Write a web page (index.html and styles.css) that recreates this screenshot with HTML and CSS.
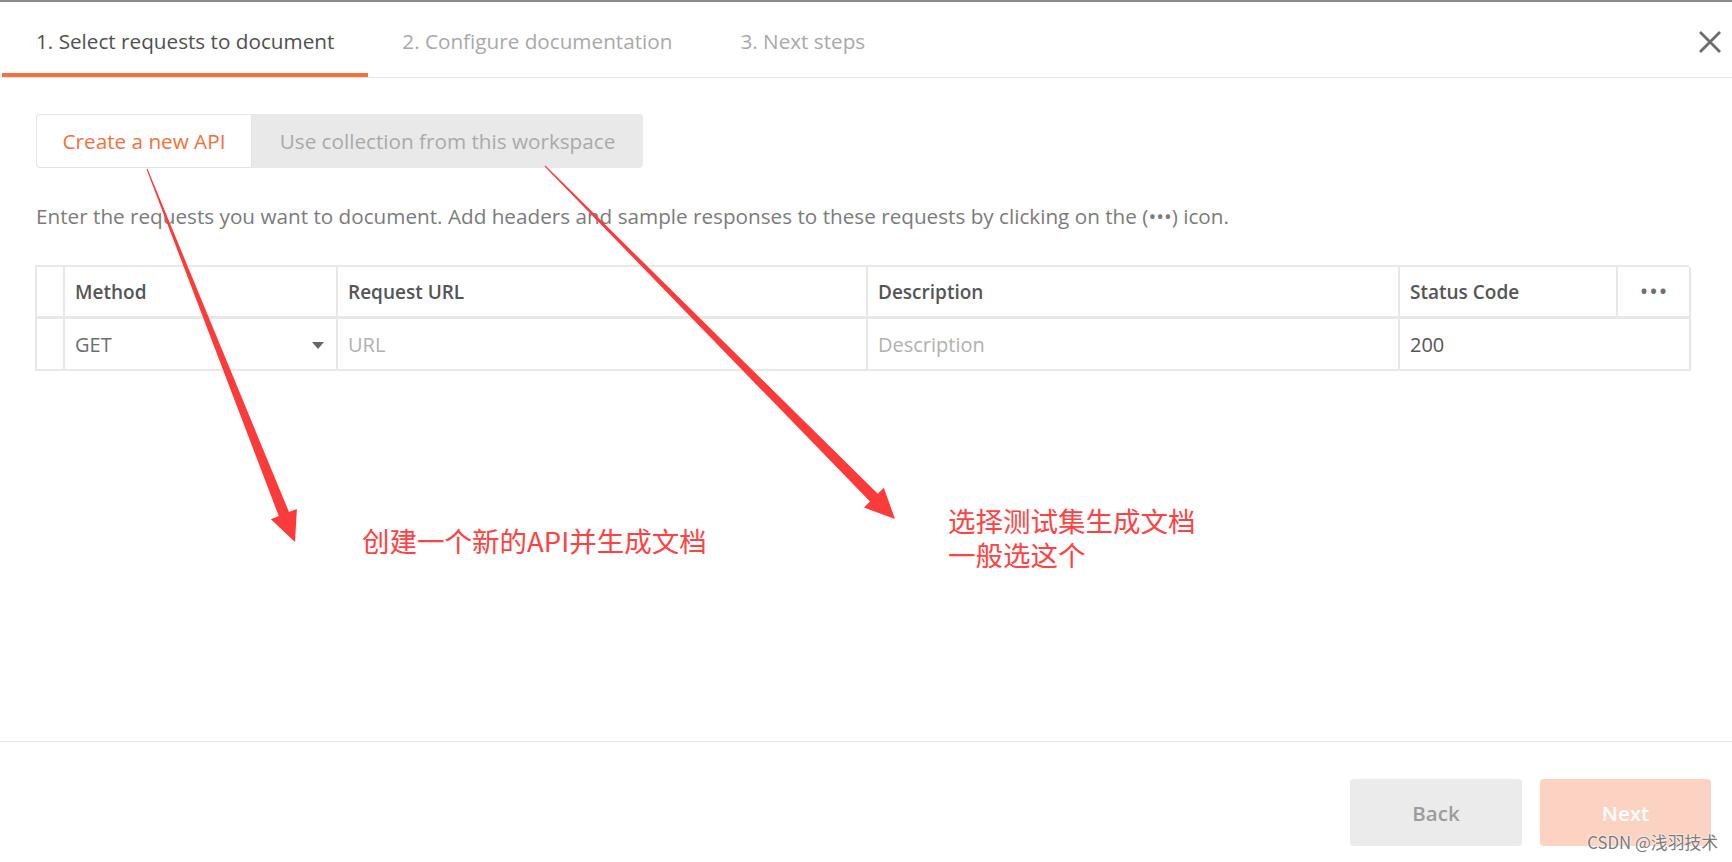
FILE: index.html
```html
<!DOCTYPE html>
<html lang="en">
<head>
<meta charset="utf-8">
<title>Create documentation</title>
<link rel="stylesheet" href="styles.css">
</head>
<body>
<div class="page">
  <div class="topline"></div>
  <header class="steps">
    <div class="step active">1. Select requests to document</div>
    <div class="step">2. Configure documentation</div>
    <div class="step">3. Next steps</div>
    <svg class="close" width="22" height="22" viewBox="0 0 22 22">
      <path d="M2 2 L20 20 M20 2 L2 20" stroke="#6d6d6d" stroke-width="2.8" stroke-linecap="square" fill="none"/>
    </svg>
  </header>

  <main class="main">
    <div class="segmented">
      <div class="seg seg-on">Create a new API</div>
      <div class="seg seg-off">Use collection from this workspace</div>
    </div>
    <p class="hint">Enter the requests you want to document. Add headers and sample responses to these requests by clicking on the (•••) icon.</p>

    <div class="table">
      <div class="cell head"></div>
      <div class="cell head">Method</div>
      <div class="cell head">Request URL</div>
      <div class="cell head">Description</div>
      <div class="cell head">Status Code</div>
      <div class="cell head more">•••</div>

      <div class="cell"></div>
      <div class="cell value method">GET<span class="caret"></span></div>
      <div class="cell ph">URL</div>
      <div class="cell ph">Description</div>
      <div class="cell value status">200</div>
    </div>
  </main>

  <footer class="footer">
    <button class="btn back">Back</button>
    <button class="btn next">Next</button>
  </footer>

  <svg class="arrows" width="1732" height="862" viewBox="0 0 1732 862">
    <polygon fill="#fb3a3a" points="147.5,168.8 289.0,512.1 296.9,508.9 295,542 270.9,519.3 278.8,516.1 146.5,169.2"/>
    <polygon fill="#fb3a3a" points="545.4,165.6 877.8,493.8 883.8,487.8 895,519 864.0,507.6 870.0,501.6 544.6,166.4"/>
  </svg>
  <div class="note note1">创建一个新的API并生成文档</div>
  <div class="note note2">
    <div class="note-line">选择测试集生成文档</div>
    <div class="note-line">一般选这个</div>
  </div>
  <div class="watermark">CSDN @浅羽技术</div>
</div>
</body>
</html>
```

FILE: styles.css
```css
* { box-sizing: border-box; }
html, body { margin: 0; padding: 0; background: #fff; }
body {
  font-family: "Open Sans", "Noto Sans", sans-serif;
  color: #505050;
}
.page {
  position: relative;
  width: 1732px;
  height: 862px;
  display: flex;
  flex-direction: column;
  overflow: hidden;
}
.topline { height: 2px; background: #8c8c8c; flex: none; }

.steps {
  flex: none;
  height: 76px;
  display: flex;
  align-items: stretch;
  padding: 0 11px 0 2px;
  border-bottom: 1px solid #e6e6e6;
}
.step {
  display: flex;
  align-items: center;
  padding: 6px 34px 0 34px;
  font-size: 20.7px;
  color: #a9a9a9;
  border-bottom: 4px solid transparent;
  white-space: nowrap;
}
.step.active {
  color: #505050;
  border-bottom-color: #f4703d;
}
.close { margin-left: auto; align-self: center; margin-top: 4px; }

.main {
  flex: 1;
  padding: 36px 43px 0 35px;
}
.segmented {
  display: flex;
  width: 607px;
  height: 54px;
  margin-left: 1px;
  border-radius: 4px;
  overflow: hidden;
  background: #e9e9e9;
}
.seg {
  display: flex;
  align-items: center;
  justify-content: center;
  font-size: 20.7px;
  white-space: nowrap;
}
.seg-on {
  width: 216px;
  background: #fff;
  color: #f4703d;
  border: 1px solid #e4e4e4;
  border-radius: 4px 0 0 4px;
}
.seg-off {
  flex: 1;
  color: #a9a9a9;
}
.hint {
  margin: 36px 0 0 1px;
  font-size: 20.7px;
  line-height: 24px;
  color: #7b7b7b;
  white-space: nowrap;
}

.table {
  margin-top: 37px;
  display: grid;
  grid-template-columns: 28px 273px 530px 532px 218px 73px;
  grid-auto-rows: 52px;
  width: 1654px;
  border-top: 2px solid #e8e8e8;
  border-left: 2px solid #e8e8e8;
}
.cell {
  display: flex;
  align-items: center;
  padding: 0 10px;
  border-right: 2px solid #e8e8e8;
  border-bottom: 2px solid #e8e8e8;
  font-size: 20px;
  white-space: nowrap;
}
.head {
  font-weight: 600;
  font-size: 19px;
  color: #555;
  border-bottom-width: 3px;
}
.head.more {
  justify-content: center;
  color: #6f6f6f;
  font-size: 20px;
  letter-spacing: 2px;
  padding: 0 0 0 2px;
}
.value { color: #6e6e6e; }
.status { grid-column: span 2; color: #555; }
.ph { color: #b1b1b1; }
.method { justify-content: space-between; }
.caret {
  width: 0;
  height: 0;
  border-left: 6px solid transparent;
  border-right: 6px solid transparent;
  border-top: 7px solid #666;
  margin-right: 2px;
  margin-top: 3px;
}

.footer {
  flex: none;
  height: 121px;
  border-top: 1px solid #e6e6e6;
  display: flex;
  justify-content: flex-end;
  align-items: flex-start;
  gap: 18px;
  padding: 37px 21px 0 0;
}
.btn {
  width: 172px;
  height: 67px;
  border: none;
  border-radius: 4px;
  font-family: "Open Sans", sans-serif;
  font-size: 20.5px;
  font-weight: 600;
}
.back { background: #ebebeb; color: #9c9c9c; }
.next { width: 171px; background: #fcd3c2; color: #fff; }

.arrows { position: absolute; left: 0; top: 0; pointer-events: none; }
.note {
  position: absolute;
  font-family: "Noto Sans CJK SC", sans-serif;
  color: #ff4141;
  white-space: nowrap;
}
.note1 { left: 362px; top: 523px; font-size: 27.5px; line-height: 34px; }
.note2 {
  left: 948px;
  top: 503px;
  font-size: 27.5px;
  line-height: 34px;
  display: flex;
  flex-direction: column;
}
.note-line { height: 34px; }
.watermark {
  position: absolute;
  right: 14px;
  bottom: 8px;
  font-family: "Noto Sans CJK SC", sans-serif;
  font-size: 16.8px;
  color: #7a7a7a;
  text-shadow: 0 0 2px #fff, 0 0 2px #fff;
}
```
